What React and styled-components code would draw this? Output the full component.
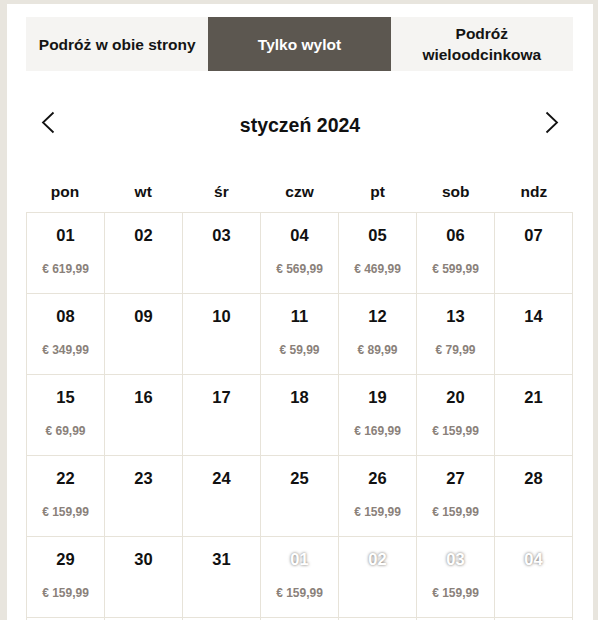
import React, { useState } from "react";
import styled, { createGlobalStyle } from "styled-components";

const GlobalStyle = createGlobalStyle`
  body {
    margin: 0;
    background: #e8e5de;
    font-family: "Liberation Sans", Arial, sans-serif;
  }
`;

const tabs = ["Podróż w obie strony", "Tylko wylot", "Podróż wieloodcinkowa"];
const weekdays = ["pon", "wt", "śr", "czw", "pt", "sob", "ndz"];

const prices = {
  1: "619,99",
  4: "569,99",
  5: "469,99",
  6: "599,99",
  8: "349,99",
  11: "59,99",
  12: "89,99",
  13: "79,99",
  15: "69,99",
  19: "169,99",
  20: "159,99",
  22: "159,99",
  26: "159,99",
  27: "159,99",
  29: "159,99",
};

const nextPrices = { 1: "159,99", 3: "159,99" };

const pad = (n) => String(n).padStart(2, "0");

const buildDays = () => {
  const days = [];
  for (let d = 1; d <= 31; d++) days.push({ day: d, price: prices[d], outside: false });
  for (let d = 1; d <= 4; d++) days.push({ day: d, price: nextPrices[d], outside: true });
  return days;
};

const Chevron = ({ dir }) => (
  <svg width="14" height="23" viewBox="0 0 14 23" fill="none">
    <path
      d={dir === "left" ? "M12.5 1.5 L2 11.5 L12.5 21.5" : "M1.5 1.5 L12 11.5 L1.5 21.5"}
      stroke="#111"
      strokeWidth="1.8"
    />
  </svg>
);

const App = () => {
  const [active, setActive] = useState(1);
  const days = buildDays();

  return (
    <>
      <GlobalStyle />
      <Panel>
        <Tabs>
          {tabs.map((t, i) => (
            <Tab key={t} $active={i === active} onClick={() => setActive(i)}>
              {t}
            </Tab>
          ))}
        </Tabs>

        <MonthHeader>
          <ArrowButton aria-label="poprzedni miesiąc">
            <Chevron dir="left" />
          </ArrowButton>
          <MonthTitle>styczeń 2024</MonthTitle>
          <ArrowButton aria-label="następny miesiąc">
            <Chevron dir="right" />
          </ArrowButton>
        </MonthHeader>

        <Weekdays>
          {weekdays.map((w) => (
            <Weekday key={w}>{w}</Weekday>
          ))}
        </Weekdays>

        <Grid>
          {days.map((d, i) => (
            <Cell key={i}>
              <DayNum $outside={d.outside}>{pad(d.day)}</DayNum>
              {d.price && <Price>€ {d.price}</Price>}
            </Cell>
          ))}
          {/* next week row continues below the fold */}
          {Array.from({ length: 7 }).map((_, i) => (
            <Cell key={`n${i}`} />
          ))}
        </Grid>
      </Panel>
    </>
  );
};

const Panel = styled.div`
  margin: 4px 5px 0 7px;
  background: #fff;
  padding: 13px 20px 0 19px;
  height: calc(100vh - 4px);
  box-sizing: border-box;
  overflow: hidden;
`;

const Tabs = styled.div`
  display: grid;
  grid-template-columns: repeat(3, 1fr);
  height: 54px;
`;

const Tab = styled.button`
  border: none;
  margin: 0;
  padding: 0 4px;
  font-family: inherit;
  font-size: 15.5px;
  font-weight: 700;
  line-height: 21px;
  cursor: pointer;
  background: ${(p) => (p.$active ? "#5c5750" : "#f5f4f2")};
  color: ${(p) => (p.$active ? "#fff" : "#141414")};
`;

const MonthHeader = styled.div`
  display: flex;
  align-items: center;
  justify-content: space-between;
  height: 44px;
  margin-top: 29px;
  padding: 0 14px 0 15px;
`;

const ArrowButton = styled.button`
  background: none;
  border: none;
  padding: 0;
  display: flex;
  cursor: pointer;
`;

const MonthTitle = styled.h2`
  margin: 7px 0 0;
  font-size: 19.5px;
  font-weight: 700;
  color: #111;
`;

const Weekdays = styled.div`
  display: grid;
  grid-template-columns: repeat(7, 1fr);
  height: 42px;
  padding-top: 2px;
  box-sizing: border-box;
  margin-top: 26px;
  align-items: center;
`;

const Weekday = styled.div`
  text-align: center;
  font-size: 15.5px;
  font-weight: 700;
  color: #111;
`;

const Grid = styled.div`
  display: grid;
  grid-template-columns: repeat(7, 1fr);
  border-top: 1px solid #e7e3d9;
  border-left: 1px solid #e7e3d9;
`;

const Cell = styled.div`
  border-right: 1px solid #e7e3d9;
  border-bottom: 1px solid #e7e3d9;
  display: flex;
  flex-direction: column;
  align-items: center;
  padding-top: 13px;
  height: 67px;
`;

const DayNum = styled.div`
  font-size: 16.5px;
  font-weight: 700;
  line-height: 18px;
  color: ${(p) => (p.$outside ? "#fff" : "#111")};
  text-shadow: ${(p) => (p.$outside ? "0 0 3px rgba(60, 55, 50, 0.75)" : "none")};
`;

const Price = styled.div`
  margin-top: 18px;
  font-size: 12px;
  font-weight: 700;
  line-height: 14px;
  color: #8a817a;
`;

export default App;
